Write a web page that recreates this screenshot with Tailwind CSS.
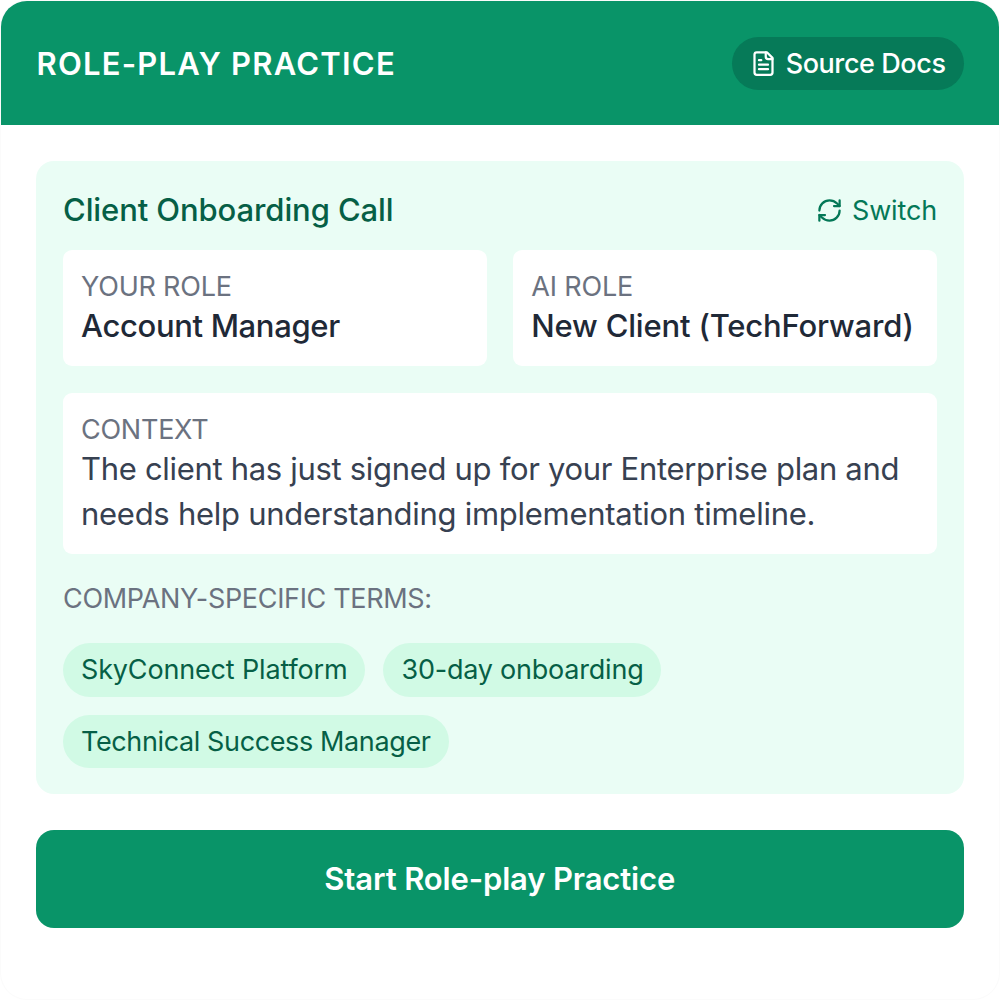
<!DOCTYPE html>
<html lang="en">
<head>
<meta charset="utf-8">
<title>Role-play Practice</title>
<script src="https://cdn.jsdelivr.net/npm/@tailwindcss/browser@4"></script>
</head>
<body class="bg-white font-['Inter',sans-serif]">
<main class="h-[1000px] w-[1000px] overflow-hidden rounded-[27px] border border-[#fbfbfb] bg-white">
  <header class="flex h-[124px] items-start justify-between bg-[#099468] px-[35.5px] pt-[35.5px] text-white">
    <h1 class="text-[31px] leading-[53px] font-semibold tracking-[1.22px] whitespace-nowrap">ROLE-PLAY PRACTICE</h1>
    <button class="flex h-[53.5px] items-center gap-[9px] rounded-full bg-[#067a58] pr-[18px] pl-[17.5px] text-[27px] font-medium tracking-[-0.42px] whitespace-nowrap">
      <svg class="size-[27px]" viewBox="0 0 24 24" fill="none" stroke="currentColor" stroke-width="2" stroke-linecap="round" stroke-linejoin="round"><path d="M15 2H6a2 2 0 0 0-2 2v16a2 2 0 0 0 2 2h12a2 2 0 0 0 2-2V7Z"/><path d="M14 2v4a2 2 0 0 0 2 2h4M10 9H8M16 13H8M16 17H8"/></svg>
      <span class="pt-[2px]">Source Docs</span>
    </button>
  </header>
  <div class="pt-9 pr-[35.5px] pl-[35px]">
    <section class="h-[633px] rounded-[18px] bg-[#eafdf5] pt-[27px] pr-[26.5px] pl-[27px]">
      <div class="flex h-[45px] items-center justify-between text-[#065f46]">
        <h2 class="text-[31px] font-medium tracking-[-0.1px] whitespace-nowrap">Client Onboarding Call</h2>
        <button class="flex items-center gap-[9px] text-[27px] tracking-[-0.15px] text-[#047857]">
          <svg class="size-[27px]" viewBox="0 0 24 24" fill="none" stroke="currentColor" stroke-width="2" stroke-linecap="round" stroke-linejoin="round"><path d="M3 12a9 9 0 0 1 9-9 9.75 9.75 0 0 1 6.74 2.74L21 8"/><path d="M21 3v5h-5M21 12a9 9 0 0 1-9 9 9.75 9.75 0 0 1-6.74-2.74L3 16"/><path d="M8 16H3v5"/></svg>
          <span class="pt-[2px]">Switch</span>
        </button>
      </div>
      <div class="mt-[17px] grid grid-cols-2 gap-[26.5px]">
        <div class="h-[116px] rounded-[9px] bg-white px-[18px] pt-[19px]">
          <div class="text-[27px] leading-9 tracking-[-0.2px] text-[#6b7280]">YOUR ROLE</div>
          <div class="text-[31px] leading-[42px] font-medium tracking-[-0.34px] whitespace-nowrap text-[#1f2937]">Account Manager</div>
        </div>
        <div class="h-[116px] rounded-[9px] bg-white px-[18px] pt-[19px]">
          <div class="text-[27px] leading-9 tracking-[-0.15px] text-[#6b7280]">AI ROLE</div>
          <div class="text-[31px] leading-[42px] font-medium tracking-[-0.18px] whitespace-nowrap text-[#1f2937]">New Client (TechForward)</div>
        </div>
      </div>
      <div class="mt-[27px] h-[160.5px] rounded-[9px] bg-white px-[18px] pt-[19px]">
        <div class="text-[27px] leading-9 tracking-[-0.25px] text-[#6b7280]">CONTEXT</div>
        <p class="-mt-px text-[31px] leading-[44.5px] whitespace-nowrap text-[#374151]"><span class="tracking-[-0.31px]">The client has just signed up for your Enterprise plan and</span><br><span class="tracking-[-0.27px]">needs help understanding implementation timeline.</span></p>
      </div>
      <div class="mt-[27.5px] text-[27px] leading-9 tracking-[-0.33px] text-[#6b7280]">COMPANY-SPECIFIC TERMS:</div>
      <div class="mt-[26px] flex flex-wrap gap-[18px] text-[27px] leading-[53.5px] text-[#065f46]">
        <span class="rounded-full bg-[#d1fae5] px-[18px] tracking-[-0.16px] whitespace-nowrap">SkyConnect Platform</span>
        <span class="rounded-full bg-[#d1fae5] px-[18px] tracking-[-0.22px] whitespace-nowrap">30-day onboarding</span>
        <span class="rounded-full bg-[#d1fae5] px-[18px] tracking-[-0.38px] whitespace-nowrap">Technical Success Manager</span>
      </div>
    </section>
    <button class="mt-9 h-[98px] w-full rounded-[18px] bg-[#099468] text-[31px] font-semibold tracking-[-0.15px] text-white">Start Role-play Practice</button>
  </div>
</main>
</body>
</html>
